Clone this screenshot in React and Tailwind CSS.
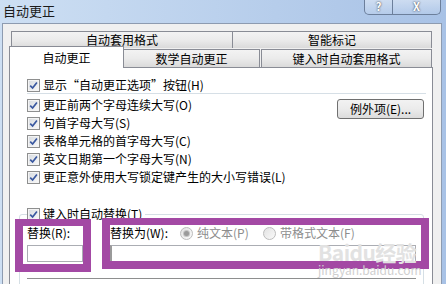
import React from "react";

function Check({ checked = true }) {
  return (
    <span className="flex h-[13px] w-[13px] shrink-0 items-center justify-center border border-[#8e8f8f] bg-white">
      <span className="flex h-[11px] w-[11px] items-center justify-center border border-[#f4f4f4] bg-gradient-to-br from-[#d9dde2] to-[#f7f7f7]">
        {checked && (
          <svg width="9" height="9" viewBox="0 0 9 9">
            <path d="M1.2 4.6 L3.6 7 L7.9 1.4" stroke="#3a58a0" strokeWidth="1.7" fill="none" />
          </svg>
        )}
      </span>
    </span>
  );
}

function Radio({ on }) {
  return (
    <span className="flex h-[13px] w-[13px] shrink-0 items-center justify-center rounded-full border border-[#bcbcbc] bg-gradient-to-br from-[#e2e2e2] to-[#fafafa]">
      {on && <span className="h-[5px] w-[5px] rounded-full bg-[#9a9a9a] ring-1 ring-[#c4c4c4]" />}
    </span>
  );
}

function Row({ label }) {
  return (
    <div className="flex h-[18px] items-center gap-[3px]">
      <Check />
      <span>{label}</span>
    </div>
  );
}

const tab = "flex items-center justify-center border-[#898c95] bg-gradient-to-b from-[#f3f3f3] via-[#ebebeb] to-[#dadada]";

export default function App() {
  const rows = [
    "更正前两个字母连续大写(O)",
    "句首字母大写(S)",
    "表格单元格的首字母大写(C)",
    "英文日期第一个字母大写(N)",
    "更正意外使用大写锁定键产生的大小写错误(L)",
  ];

  return (
    <div className="relative flex h-[284px] w-[446px] flex-col overflow-hidden bg-gradient-to-r from-[#cddff3] to-[#a8c2e6] text-[12px] leading-none text-black font-['Noto_Sans_CJK_SC','Noto_Sans',sans-serif]">
      {/* title bar */}
      <div className="flex h-[23px] shrink-0 items-start justify-between">
        <span className="ml-[3px] mt-[4px] text-[13px] text-[#1b1b1b]">自动更正</span>
        <div className="mr-[5px] flex h-[15px] rounded-b-[5px] border border-t-0 border-[#6c7f9b] bg-gradient-to-b from-white/40 to-white/10">
          <span className="flex w-[28px] items-start justify-center border-r border-[#6c7f9b] text-[11px] font-bold leading-[13px] text-white [text-shadow:0_0_2px_#222]">?</span>
          <span className="flex w-[47px] items-start justify-center text-[11px] font-bold leading-[13px] text-white [text-shadow:0_0_2px_#222]">X</span>
        </div>
      </div>

      {/* dialog body */}
      <div className="ml-[2px] mr-[4px] flex-1 border-l border-r border-t border-[#8d9bb0] bg-[#f0f0f0] pl-[6px] pt-[7px]">
        {/* tab rows */}
        <div className="ml-[2px] flex h-[17px]">
          <div className={`${tab} w-[222px] border-l border-r border-t`}>自动套用格式</div>
          <div className={`${tab} w-[199px] border-r border-t`}>智能标记</div>
        </div>
        <div className="-mt-[2px] flex h-[21px] items-start">
          <div className="relative z-10 flex h-[22px] w-[115px] items-center justify-center border-l border-r border-t border-[#898c95] bg-white">
            自动更正
          </div>
          <div className={`${tab} mt-[3px] h-[18px] w-[136px] border-r border-t`}>数学自动更正</div>
          <div className={`${tab} ml-px mt-[3px] h-[18px] w-[171px] border-l border-r border-t`}>键入时自动套用格式</div>
        </div>

        {/* tab panel */}
        <div className="h-[230px] w-[424px] border border-[#898c95] bg-white pl-[17px] pr-[6px] pt-[9px]">
          <div className="flex h-[16px] items-center gap-[3px]">
            <Check />
            <span>显示“自动更正选项”按钮(H)</span>
          </div>
          <div className="h-px bg-[#d6dfe6]" />

          <div className="mt-[2px] flex justify-between">
            <div className="flex flex-col">
              {rows.map((r) => (
                <Row key={r} label={r} />
              ))}
            </div>
            <button className="mr-[2px] mt-[3px] flex h-[20px] w-[87px] items-center justify-center rounded-[3px] border border-[#707070] bg-gradient-to-b from-[#f2f2f2] via-[#ebebeb] to-[#dcdcdc]">
              例外项(E)...
            </button>
          </div>

          {/* group box */}
          <div className="-ml-[8px] mr-[2px] mt-[28px] h-[90px] rounded-[3px] border border-[#d5dfe5] pl-[7px]">
            <div className="-mt-[8px] flex h-[14px] w-max items-center gap-[3px] bg-white pr-[3px]">
              <Check />
              <span>键入时自动替换(T)</span>
            </div>
            <div className="mt-[4px] flex">
              <div className="flex w-[56px] flex-col">
                <span className="flex h-[16px] items-center">替换(R):</span>
                <div className="mt-[4px] h-[17px] border border-[#abadb3]" />
              </div>
              <div className="ml-[27px] flex w-[306px] flex-col">
                <div className="flex h-[16px] items-center">
                  <span className="w-[70px]">替换为(W):</span>
                  <Radio on />
                  <span className="ml-[4px] w-[66px] text-[#8d8d8d]">纯文本(P)</span>
                  <Radio />
                  <span className="ml-[4px] text-[#8d8d8d]">带格式文本(F)</span>
                </div>
                <div className="mt-[4px] h-[17px] border border-l-2 border-[#abadb3] border-l-[#9a9a9a]" />
              </div>
            </div>
            <div className="mt-[16px] h-[30px] w-[389px] border-t border-[#8e8f8f]" />
          </div>
        </div>
      </div>

      {/* annotation boxes */}
      <div className="absolute left-[15px] top-[219px] h-[53px] w-[76px] border-[8px] border-t-[7px] border-[#a349a4]" />
      <div className="absolute left-[102px] top-[218px] h-[51px] w-[327px] border-[8px] border-t-[7px] border-[#a349a4]" />

      {/* watermark */}
      <div className="absolute left-[318px] top-[242px] flex flex-col text-[#e2e2e2]">
        <span className="text-[21px] font-bold leading-[21px] tracking-tight">Baidu经验</span>
        <span className="text-[12px] leading-[14px] text-[#cfcfcf]">jingyan.baidu.com</span>
      </div>
    </div>
  );
}
